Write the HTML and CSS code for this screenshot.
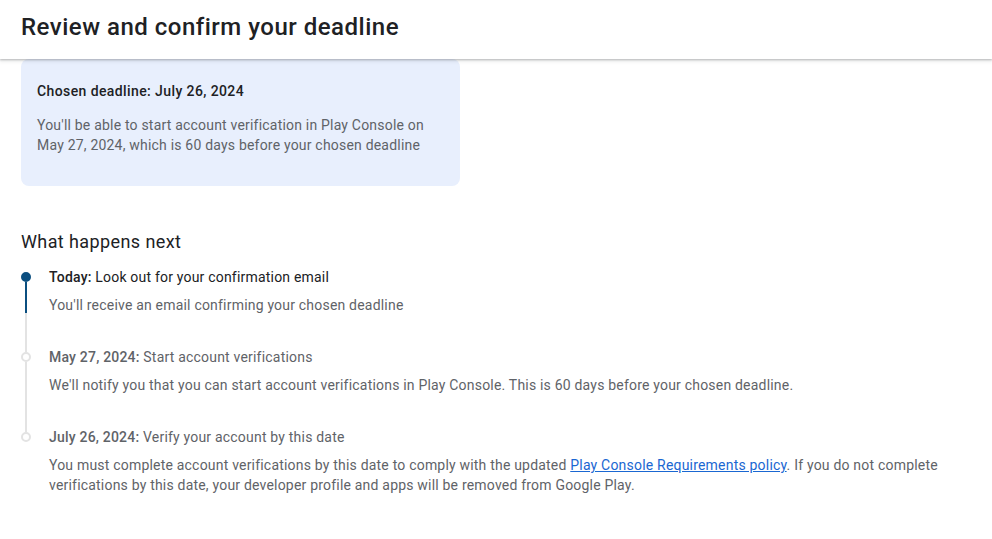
FILE: index.html
```html
<!DOCTYPE html>
<html lang="en">
<head>
<meta charset="utf-8">
<title>Review and confirm your deadline</title>
<link rel="stylesheet" href="styles.css">
</head>
<body>
<header class="topbar">
  <h1 class="title">Review and confirm your deadline</h1>
</header>
<main class="content">
  <section class="card">
    <h2 class="card-title">Chosen deadline: July 26, 2024</h2>
    <p class="card-text">You'll be able to start account verification in Play Console on May 27, 2024, which is 60 days before your chosen deadline</p>
  </section>

  <h2 class="section-title">What happens next</h2>
  <ol class="timeline">
    <li class="step step-active">
      <div class="rail"><span class="seg seg-top"></span><span class="dot"></span><span class="seg seg-bottom"></span></div>
      <div class="step-body">
        <p class="step-title"><strong>Today:</strong> Look out for your confirmation email</p>
        <p class="step-text">You'll receive an email confirming your chosen deadline</p>
      </div>
    </li>
    <li class="step">
      <div class="rail"><span class="seg seg-top"></span><span class="dot"></span><span class="seg seg-bottom"></span></div>
      <div class="step-body">
        <p class="step-title"><strong>May 27, 2024:</strong> Start account verifications</p>
        <p class="step-text">We'll notify you that you can start account verifications in Play Console. This is 60 days before your chosen deadline.</p>
      </div>
    </li>
    <li class="step step-last">
      <div class="rail"><span class="seg seg-top"></span><span class="dot"></span><span class="seg seg-bottom"></span></div>
      <div class="step-body">
        <p class="step-title"><strong>July 26, 2024:</strong> Verify your account by this date</p>
        <p class="step-text">You must complete account verifications by this date to comply with the updated <a href="#" class="link">Play Console Requirements policy</a>. If you do not complete verifications by this date, your developer profile and apps will be removed from Google Play.</p>
      </div>
    </li>
  </ol>
</main>
</body>
</html>
```

FILE: styles.css
```css
* { box-sizing: border-box; }
html, body { margin: 0; padding: 0; background: #fff; }
body {
  font-family: Roboto, "Liberation Sans", Arial, sans-serif;
  color: #5f6368;
  font-size: 14px;
  line-height: 20px;
  letter-spacing: 0.2px;
}
p, h1, h2, ol { margin: 0; padding: 0; }

.topbar {
  height: 59px;
  background: #fff;
  display: flex;
  align-items: center;
  padding: 0 21px 6px;
  box-shadow: 0 1px 2px rgba(60, 64, 67, 0.3), 0 1px 4px 1px rgba(60, 64, 67, 0.12);
  position: relative;
  z-index: 1;
}
.title {
  font-family: Roboto, "Liberation Sans", sans-serif;
  font-size: 24px;
  font-weight: 500;
  color: #202124;
  line-height: 32px;
  letter-spacing: 0.5px;
}

.content {
  padding: 0 21px 40px;
}

.card {
  width: 439px;
  background: #e8effd;
  border-radius: 8px;
  padding: 22px 16px 31px;
}
.card-title {
  font-family: Roboto, "Liberation Sans", sans-serif;
  font-size: 14px;
  font-weight: 500;
  color: #202124;
  line-height: 20px;
  letter-spacing: 0.4px;
}
.card-text {
  margin-top: 14px;
}

.section-title {
  margin-top: 44px;
  font-family: Roboto, "Liberation Sans", sans-serif;
  font-size: 18px;
  font-weight: 400;
  color: #202124;
  line-height: 24px;
  letter-spacing: 0.4px;
}

.timeline {
  list-style: none;
  margin-top: 13px;
}
.step {
  display: flex;
  gap: 18px;
}
.rail {
  width: 10px;
  flex: none;
  display: flex;
  flex-direction: column;
  align-items: center;
}
.seg {
  width: 2px;
  background: #e3e3e3;
}
.seg-top { height: 5px; flex: none; }
.seg-bottom { flex: 1; }
.dot {
  width: 10px;
  height: 10px;
  border-radius: 50%;
  border: 2px solid #e3e3e3;
  background: #fff;
  flex: none;
}
.step-active .seg-top { background: transparent; }
.step-active .dot { background: #0b4f80; border-color: #0b4f80; }
.step-active .seg-bottom {
  background: linear-gradient(#0b4f80 0, #0b4f80 calc(100% - 34px), #e3e3e3 calc(100% - 34px));
}
.step-last .seg-bottom { background: transparent; }

.step-body {
  flex: 1;
  padding-bottom: 32px;
}
.step-last .step-body { padding-bottom: 0; }
.step-title strong { font-weight: 500; }
.step-active .step-title { color: #202124; }
.step-text { margin-top: 8px; }

.link {
  color: #1a67d2;
  text-decoration: underline;
}
```
